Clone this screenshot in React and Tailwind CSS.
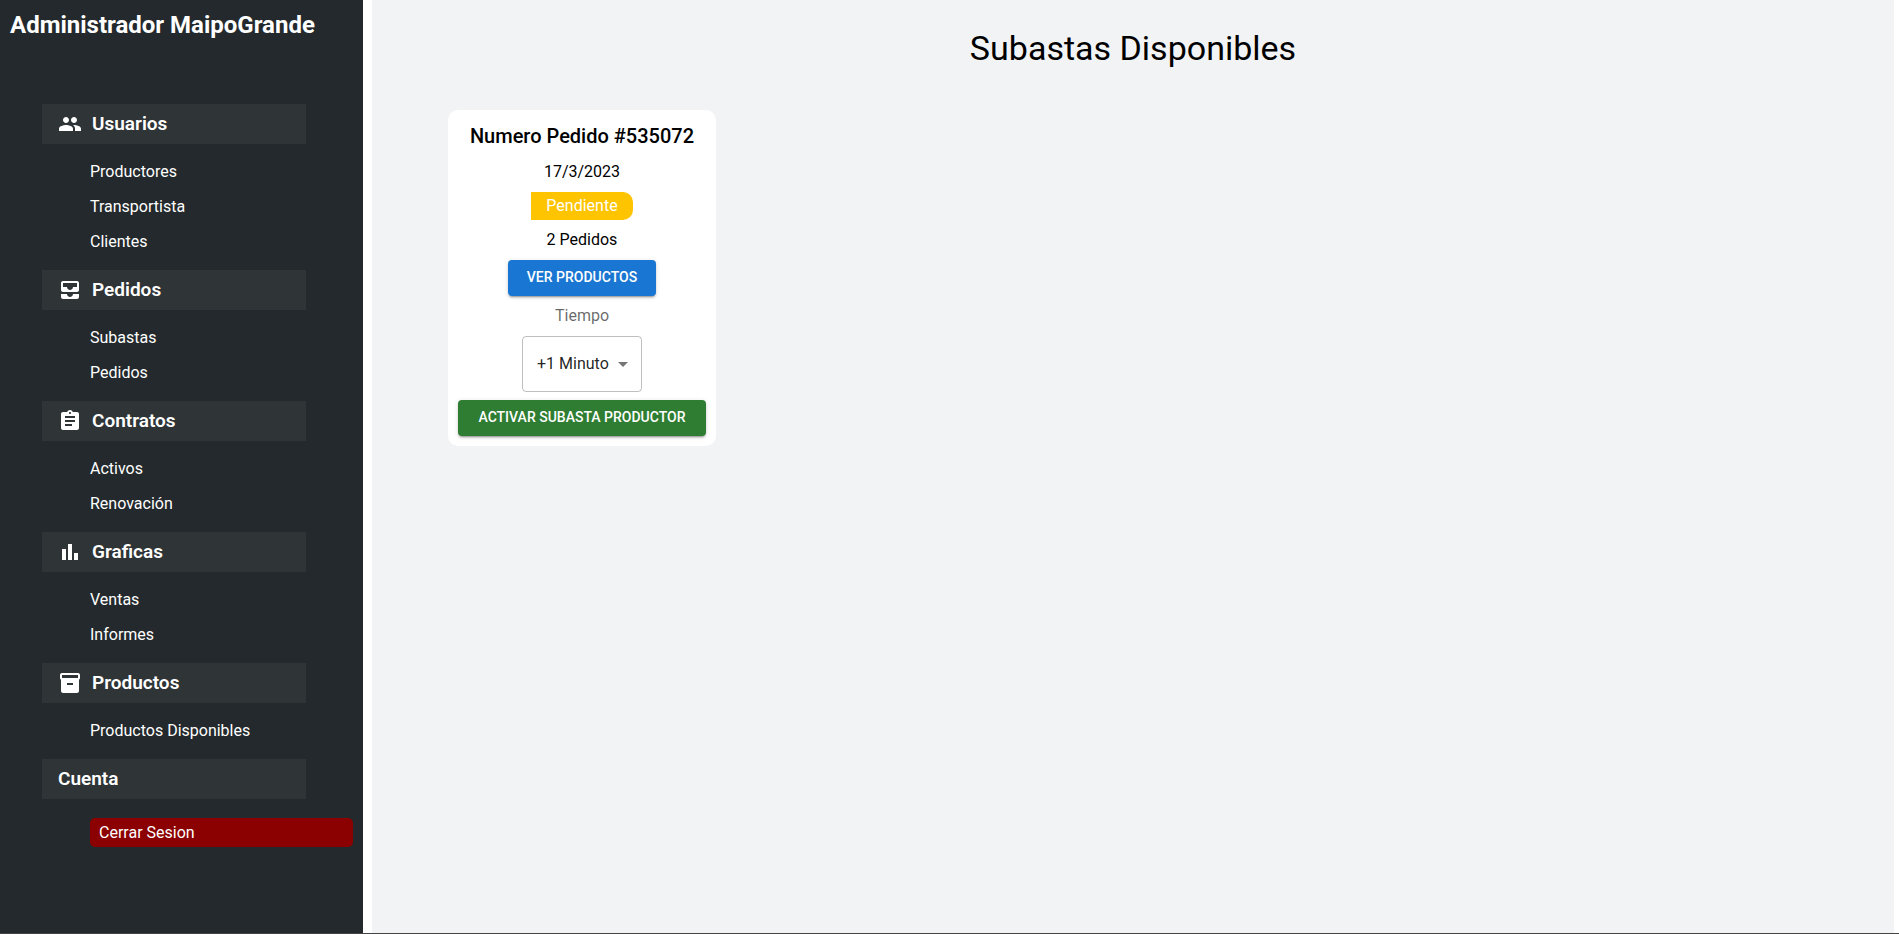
import React, { useState } from "react";
import { MdPeople, MdAllInbox, MdAssignment, MdArrowDropDown } from "react-icons/md";

function IconInventory() {
  return (
    <svg viewBox="0 0 24 24" className="size-6" fill="currentColor" aria-hidden="true">
      <path d="M20 2H4c-1 0-2 .9-2 2v3.010c0 .72.43 1.340 1 1.690V20c0 1.100 1.100 2 2 2h14c.9 0 2-.9 2-2V8.700c.57-.35 1-.97 1-1.690V4c0-1.100-1-2-2-2zm-5 12H9v-2h6v2zm5-7H4V4h16v3z" />
    </svg>
  );
}

function IconBars() {
  return (
    <svg viewBox="0 0 24 24" className="size-6" fill="currentColor" aria-hidden="true">
      <path d="M10 20h4V4h-4v16zm-6 0h4V9H4v11zM16 13v7h4v-7h-4z" />
    </svg>
  );
}

const sections = [
  { title: "Usuarios", icon: <MdPeople className="size-6" />, items: ["Productores", "Transportista", "Clientes"] },
  { title: "Pedidos", icon: <MdAllInbox className="size-6" />, items: ["Subastas", "Pedidos"] },
  { title: "Contratos", icon: <MdAssignment className="size-6" />, items: ["Activos", "Renovación"] },
  { title: "Graficas", icon: <IconBars />, items: ["Ventas", "Informes"] },
  { title: "Productos", icon: <IconInventory />, items: ["Productos Disponibles"] },
];

function SectionTitle({ icon, children }) {
  return (
    <h2 className="mr-[57px] ml-[42px] flex h-10 items-center gap-[10px] bg-[#2f3436] px-4 text-[19px] font-semibold">
      {icon}
      {children}
    </h2>
  );
}

function Sidebar() {
  return (
    <aside className="w-[363px] shrink-0 bg-[#23292c] text-white">
      <h1 className="px-[10px] pt-[9px] text-2xl font-bold">Administrador MaipoGrande</h1>
      <nav className="pt-[63px]">
        {sections.map((section) => (
          <section key={section.title}>
            <SectionTitle icon={section.icon}>{section.title}</SectionTitle>
            <ul className="pt-[10px] pb-[11px] pl-[90px]">
              {section.items.map((item) => (
                <li key={item} className="flex h-[35px] items-center">
                  <a href="#">{item}</a>
                </li>
              ))}
            </ul>
          </section>
        ))}
        <SectionTitle>Cuenta</SectionTitle>
        <div className="flex pt-[19px] pr-[10px] pl-[90px]">
          <button type="button" className="h-[29px] flex-1 rounded-[5px] bg-[#8b0000] px-[9px] text-left">
            Cerrar Sesion
          </button>
        </div>
      </nav>
    </aside>
  );
}

const buttonStyle =
  "h-9 min-w-[148px] rounded px-4 pb-[2px] text-sm font-medium text-white uppercase shadow-[0_3px_1px_-2px_rgba(0,0,0,0.2),0_2px_2px_0_rgba(0,0,0,0.14),0_1px_5px_0_rgba(0,0,0,0.12)]";

function AuctionCard() {
  const [time, setTime] = useState("1");
  return (
    <article className="flex min-w-[268px] flex-col items-center gap-2 rounded-[10px] bg-white p-[10px]">
      <h3 className="text-xl leading-8 font-medium">Numero Pedido #535072</h3>
      <p>17/3/2023</p>
      <p className="rounded-r-[10px] bg-[#ffc400] px-[15px] py-[2px] text-white">Pendiente</p>
      <p>2 Pedidos</p>
      <button type="button" className={`bg-[#1976d2] ${buttonStyle}`}>
        Ver Productos
      </button>
      <label htmlFor="time" className="text-black/60">
        Tiempo
      </label>
      <div className="relative">
        <select
          id="time"
          value={time}
          onChange={(e) => setTime(e.target.value)}
          className="h-14 appearance-none rounded border border-black/25 bg-transparent pr-8 pl-[14px] text-black/87"
        >
          <option value="1">+1 Minuto</option>
        </select>
        <MdArrowDropDown className="pointer-events-none absolute top-4 right-[7px] size-6 text-black/54" />
      </div>
      <button type="button" className={`self-stretch bg-[#2e7d32] ${buttonStyle}`}>
        Activar Subasta Productor
      </button>
    </article>
  );
}

export default function App() {
  return (
    <div className="flex min-h-screen border-b border-[#444444] bg-white pr-[5px] font-[Roboto,sans-serif] text-base text-black">
      <Sidebar />
      <main className="ml-[9px] flex-1 bg-[#f2f3f5] px-[76px] pt-7">
        <h2 className="text-center text-[34px] leading-10">Subastas Disponibles</h2>
        <div className="flex flex-wrap pt-[42px]">
          <AuctionCard />
        </div>
      </main>
    </div>
  );
}
